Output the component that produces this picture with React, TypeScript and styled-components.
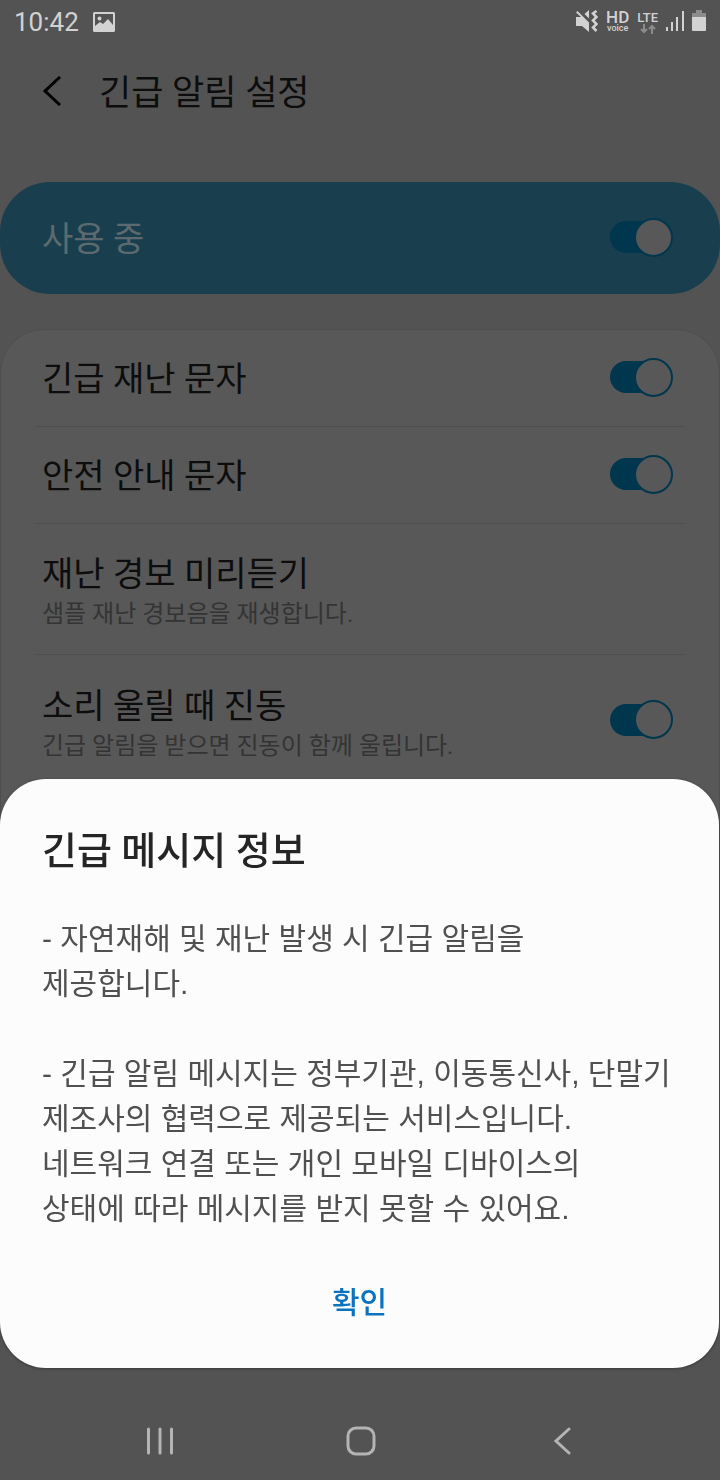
import React from "react";
import styled, { createGlobalStyle } from "styled-components";

const GlobalStyle = createGlobalStyle`
  *, *::before, *::after { box-sizing: border-box; }
  html, body { margin: 0; padding: 0; background: #535353; }
  body { font-family: Roboto, "Noto Sans CJK KR", sans-serif; color: #0d0d0d; }
  h1, h2, p { margin: 0; font-weight: 400; }
  button { font: inherit; border: 0; padding: 0; background: none; cursor: pointer; }
  svg { display: block; }
`;

const Screen = styled.div`
  display: flex;
  flex-direction: column;
  min-height: 100vh;
  background: #535353;
`;

const StatusBar = styled.div`
  display: flex;
  align-items: center;
  justify-content: space-between;
  height: 44px;
  padding: 0 14px;
  color: #d2d2d2;
`;

const StatusGroup = styled.div<{ $gap: number }>`
  display: flex;
  align-items: center;
  gap: ${(p) => p.$gap}px;
`;

const Clock = styled.time`
  font-size: 26px;
  line-height: 44px;
`;

const Network = styled.div`
  display: flex;
  flex-direction: column;
  align-items: center;
  font-weight: 500;
`;

const NetworkName = styled.span<{ $size: number }>`
  font-size: ${(p) => p.$size}px;
  line-height: 13px;
`;

const NetworkNote = styled.span`
  font-size: 9px;
  line-height: 9px;
`;

const TitleBar = styled.header`
  display: flex;
  align-items: center;
  gap: 35px;
  height: 94px;
  padding: 0 40px;
`;

const Title = styled.h1`
  padding-top: 6px;
  font-size: 35px;
  line-height: 48px;
`;

const Content = styled.main`
  display: flex;
  flex-direction: column;
  flex: 1;
  gap: 35px;
  padding: 44px 0 112px;
`;

const MasterSwitch = styled.label`
  display: flex;
  align-items: center;
  justify-content: space-between;
  height: 112px;
  padding: 0 47px 2px 42px;
  border-radius: 50px;
  background: #193f4e;
  color: #5c6a6f;
`;

const Card = styled.section`
  flex: 1;
  padding: 0 34px;
  border: 1px solid #4e4e4e;
  border-radius: 44px;
  background: #585858;
`;

const Row = styled.label<{ $tall?: boolean }>`
  display: flex;
  align-items: center;
  justify-content: space-between;
  height: ${(p) => (p.$tall ? 131 : 97)}px;
  padding: 0 12px 2px 7px;
  border-bottom: 1px solid #4e4e4e;
  &:last-child { border-bottom: 0; }
`;

const RowText = styled.span`
  display: flex;
  flex-direction: column;
  padding-top: 4px;
`;

const RowTitle = styled.span`
  font-size: 34px;
  line-height: 48px;
`;

const RowNote = styled.span`
  color: #343434;
  font-size: 24px;
  line-height: 32px;
`;

const Switch = styled.input`
  appearance: none;
  display: grid;
  align-items: center;
  flex: none;
  width: 63px;
  height: 39px;
  margin: 0;
  cursor: pointer;
  &::before, &::after { content: ""; grid-area: 1 / 1; }
  &::before {
    width: 52px;
    height: 32px;
    border-radius: 16px;
    background: #00374e;
  }
  &::after {
    justify-self: end;
    width: 39px;
    height: 39px;
    border: 2px solid #00374e;
    border-radius: 50%;
    background: #585858;
  }
`;

const SheetLayer = styled.div`
  position: fixed;
  inset: 0 0 112px;
  display: flex;
  align-items: flex-end;
  padding-right: 1px;
`;

const Sheet = styled.section`
  flex: 1;
  min-width: 0;
  padding: 48px 42px 34px;
  border-radius: 46px;
  background: #fcfcfc;
  box-shadow: 0 1px 3px #3a3a3a;
`;

const SheetTitle = styled.h2`
  color: #252525;
  font-size: 38px;
  font-weight: 500;
  line-height: 48px;
`;

const Message = styled.div`
  display: flex;
  flex-direction: column;
  gap: 45px;
  padding: 41px 0;
  color: #505050;
  font-family: "Liberation Sans", "Noto Sans CJK KR", sans-serif;
  font-size: 30px;
  line-height: 45px;
`;

const Confirm = styled.button`
  display: block;
  width: 100%;
  color: #0b72c0;
  font-size: 30px;
  font-weight: 500;
  line-height: 62px;
`;

const NavBar = styled.nav`
  position: fixed;
  inset: auto 0 0;
  display: flex;
  justify-content: center;
  height: 80px;
  padding: 2px 58px 0 60px;
`;

const NavButton = styled.button`
  display: flex;
  align-items: center;
  justify-content: center;
  flex: 1;
`;

const Icon = ({ w, h, children }: { w: number; h: number; children: React.ReactNode }) => (
  <svg width={w} height={h} viewBox={`0 0 ${w} ${h}`} fill="none" aria-hidden="true">
    {children}
  </svg>
);

const rows = [
  { id: "disaster", title: "긴급 재난 문자", toggle: true },
  { id: "safety", title: "안전 안내 문자", toggle: true },
  { id: "preview", title: "재난 경보 미리듣기", note: "샘플 재난 경보음을 재생합니다." },
  { id: "vibrate", title: "소리 울릴 때 진동", note: "긴급 알림을 받으면 진동이 함께 울립니다.", toggle: true },
];

export default function App() {
  return (
    <Screen>
      <GlobalStyle />
      <StatusBar>
        <StatusGroup $gap={14}>
          <Clock>10:42</Clock>
          <Icon w={22} h={20}>
            <path
              fill="#d2d2d2"
              fillRule="evenodd"
              d="M1.5 0h19Q22 0 22 1.500v17q0 1.500-1.500 1.500h-19Q0 20 0 18.500v-17Q0 0 1.500 0ZM2 2v12l5-4 3 2 5-5 5 6V2ZM6.500 4.500a2 2 0 1 1 0 4 2 2 0 0 1 0-4Z"
            />
          </Icon>
        </StatusGroup>
        <StatusGroup $gap={8}>
          <Icon w={22} h={24}>
            <path fill="#d2d2d2" d="M0 7h5L0 2.500 1.500 1 13 12.500V22l-7-6H0ZM8.500 4 13 0v8.500Z" />
            <path
              stroke="#d2d2d2"
              strokeWidth="2.5"
              d="M20.500 1 17 3.500l3.500 3.500-3.500 3.500 3.500 3.500-3.500 3.500 3.500 3.500"
            />
          </Icon>
          <Network>
            <NetworkName $size={17}>HD</NetworkName>
            <NetworkNote>voice</NetworkNote>
          </Network>
          <Network>
            <NetworkName $size={13}>LTE</NetworkName>
            <Icon w={16} h={10}>
              <path stroke="#8c8c8c" strokeWidth="2" d="M4 0v8M1 5l3 3 3-3M12 10V2M9 5l3-3 3 3" />
            </Icon>
          </Network>
          <Icon w={18} h={22}>
            <path stroke="#d2d2d2" strokeWidth="2" d="M1 16v4M6 11v9M11 6v14M17 0v20" />
          </Icon>
          <Icon w={14} h={24}>
            <path fill="#8c8c8c" d="M4 0h6v3h3q1 0 1 1v4H0V4q0-1 1-1h3Z" />
            <path fill="#d2d2d2" d="M0 7h14v13q0 1-1 1H1q-1 0-1-1Z" />
          </Icon>
        </StatusGroup>
      </StatusBar>

      <TitleBar>
        <button aria-label="뒤로">
          <Icon w={24} h={30}>
            <path stroke="#000" strokeWidth="3" d="M20 1 5 15l15 14" />
          </Icon>
        </button>
        <Title>긴급 알림 설정</Title>
      </TitleBar>

      <Content>
        <MasterSwitch>
          <RowText>
            <RowTitle>사용 중</RowTitle>
          </RowText>
          <Switch type="checkbox" defaultChecked />
        </MasterSwitch>
        <Card>
          {rows.map((row) => (
            <Row key={row.id} as={row.toggle ? "label" : "div"} $tall={!!row.note}>
              <RowText>
                <RowTitle>{row.title}</RowTitle>
                {row.note && <RowNote>{row.note}</RowNote>}
              </RowText>
              {row.toggle && <Switch type="checkbox" defaultChecked />}
            </Row>
          ))}
        </Card>
      </Content>

      <SheetLayer>
        <Sheet role="dialog" aria-modal="true" aria-labelledby="sheet-title">
          <SheetTitle id="sheet-title">긴급 메시지 정보</SheetTitle>
          <Message>
            <p>
              - 자연재해 및 재난 발생 시 긴급 알림을
              <br />
              제공합니다.
            </p>
            <p>
              - 긴급 알림 메시지는 정부기관, 이동통신사, 단말기
              <br />
              제조사의 협력으로 제공되는 서비스입니다.
              <br />
              네트워크 연결 또는 개인 모바일 디바이스의
              <br />
              상태에 따라 메시지를 받지 못할 수 있어요.
            </p>
          </Message>
          <Confirm>확인</Confirm>
        </Sheet>
      </SheetLayer>

      <NavBar>
        <NavButton aria-label="최근 앱">
          <Icon w={28} h={28}>
            <path stroke="#b4b4b4" strokeWidth="3" strokeLinecap="round" d="M2.500 2v24M14 2v24M25.500 2v24" />
          </Icon>
        </NavButton>
        <NavButton aria-label="홈">
          <Icon w={30} h={30}>
            <rect x="2" y="2" width="26" height="26" rx="8" stroke="#b4b4b4" strokeWidth="3" />
          </Icon>
        </NavButton>
        <NavButton aria-label="뒤로 가기">
          <Icon w={18} h={28}>
            <path stroke="#b4b4b4" strokeWidth="3" strokeLinecap="round" d="M16 2 3 14l13 12" />
          </Icon>
        </NavButton>
      </NavBar>
    </Screen>
  );
}
